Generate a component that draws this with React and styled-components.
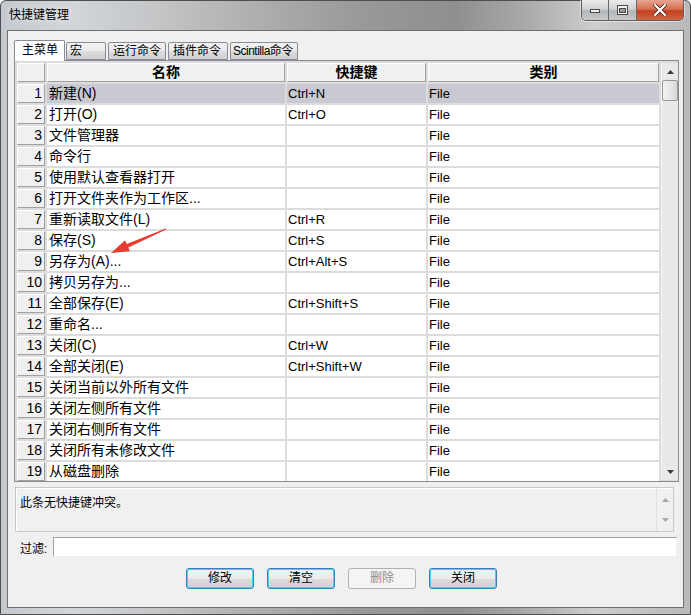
import styled, { createGlobalStyle } from 'styled-components';

const FONT = `"Liberation Sans", "Noto Sans CJK SC", sans-serif`;

const GlobalStyle = createGlobalStyle`
  html, body {
    margin: 0;
    padding: 0;
    overflow: hidden;
    background: #ffffff;
  }
`

const Window = styled.div`
  position: relative;
  box-sizing: border-box;
  width: 691px;
  height: 615px;
  border: 1px solid #4e4e4e;
  border-radius: 6px 6px 0 0;
  background: linear-gradient(90deg, #c3c9cf 0%, #d2d6da 10%, #c4c6c8 22%, #aeb0b2 36%, #999999 52%, #8f8f8f 66%, #a9a9a9 76%, #cdcdcd 86%, #b9b9b9 100%);
  display: flex;
  flex-direction: column;
  font-family: ${FONT};
  color: #000;
`

const TitleBar = styled.div`
  height: 29px;
  display: flex;
  align-items: flex-start;
`

const Title = styled.div`
  font-size: 12px;
  line-height: 12px;
  margin: 8px 0 0 8px;
  color: #000;
  text-shadow: 0 0 6px rgba(255, 255, 255, 0.9);
`

const Caption = styled.div`
  margin-left: auto;
  margin-right: 6px;
  margin-top: -1px;
  display: flex;
  height: 20px;
  border: 1px solid #5e5e5e;
  border-top: none;
  border-radius: 0 0 5px 5px;
  overflow: hidden;
  box-shadow: 0 0 0 1px rgba(255, 255, 255, 0.45);
`

const CapButton = styled.div`
  width: ${p => p.$w}px;
  height: 20px;
  display: flex;
  align-items: center;
  justify-content: center;
  border-left: ${p => (p.$first ? 'none' : '1px solid #6a6a6a')};
  background: ${p =>
    p.$close
      ? 'linear-gradient(180deg, #e8a593 0%, #d6704f 45%, #c2401f 55%, #d0663f 100%)'
      : 'linear-gradient(180deg, #e9eaeb 0%, #cfd1d3 45%, #b3b6b9 55%, #c7c9cb 100%)'};
`

const Client = styled.div`
  flex: 1;
  margin: 0 6px 6px 6px;
  border: 1px solid #6f6f6f;
  background: #f0f0f0;
  display: flex;
  flex-direction: column;
  padding-top: 9px;
`

const TabStrip = styled.div`
  display: flex;
  align-items: flex-end;
  height: 20px;
  margin-left: 6px;
  gap: 2px;
  position: relative;
  z-index: 1;
`

const Tab = styled.div`
  box-sizing: border-box;
  width: ${p => p.$w}px;
  height: ${p => (p.$active ? 21 : 18)}px;
  margin-bottom: ${p => (p.$active ? -1 : 0)}px;
  margin-right: ${p => (p.$active ? -1 : 0)}px;
  padding-left: ${p => p.$pad}px;
  border: 1px solid #898c95;
  border-bottom: ${p => (p.$active ? 'none' : '1px solid #898c95')};
  border-radius: 2px 2px 0 0;
  background: ${p => (p.$active ? '#ffffff' : 'linear-gradient(180deg, #f2f2f2 0%, #ebebeb 50%, #dddddd 51%, #cfcfcf 100%)')};
  font-size: 12px;
  letter-spacing: ${p => (p.$tight ? '-0.5px' : 'normal')};
  line-height: ${p => (p.$active ? 19 : 16)}px;
  white-space: nowrap;
  overflow: hidden;
`

const TabPage = styled.div`
  box-sizing: border-box;
  width: 665px;
  height: 422px;
  margin-left: 6px;
  border: 1px solid #898c95;
  background: #dcdcdc;
  padding: 2px 1px 1px 2px;
  display: flex;
  gap: 2px;
`

const Table = styled.div`
  display: flex;
  flex-direction: column;
  gap: 2px;
`

const Row = styled.div`
  display: grid;
  grid-template-columns: 28px 238px 139px 231px;
  column-gap: 2px;
  height: 19px;
`

const Bevel = styled.div`
  box-sizing: border-box;
  background: #f0f0f0;
  border-top: 1px solid #ffffff;
  border-left: 1px solid #ffffff;
  border-right: 1px solid #a0a0a0;
  border-bottom: 1px solid #a0a0a0;
`

const NumCell = styled(Bevel)`
  text-align: right;
  padding-right: 2px;
  font-size: 14px;
  line-height: 17px;
`

const HeadCell = styled(Bevel)`
  text-align: center;
  font-weight: bold;
  font-size: 14px;
  line-height: 17px;
`

const Cell = styled.div`
  background: ${p => (p.$sel ? '#c9c9d2' : '#ffffff')};
  padding-left: ${p => (p.$latin ? 1 : 2)}px;
  font-size: ${p => (p.$latin ? 13 : 14)}px;
  line-height: 19px;
  white-space: nowrap;
  overflow: hidden;
`

const ScrollBar = styled.div`
  width: 17px;
  box-sizing: border-box;
  background: #e9e9e9;
  border-left: 1px solid #f5f5f5;
  display: flex;
  flex-direction: column;
  align-items: center;
`

const ArrowBox = styled.div`
  height: 17px;
  width: 100%;
  display: flex;
  align-items: center;
  justify-content: center;
`

const Thumb = styled.div`
  box-sizing: border-box;
  width: 16px;
  height: 21px;
  border: 1px solid #979797;
  border-radius: 2px;
  background: linear-gradient(90deg, #f3f3f3 0%, #e6e6e6 50%, #d8d8d8 100%);
`

const Spacer = styled.div`
  flex: 1;
`

const ConflictBox = styled.div`
  box-sizing: border-box;
  width: 659px;
  height: 45px;
  margin: 5px 0 0 7px;
  border: 1px solid #c9c9c9;
  box-shadow: inset 1px 1px 0 #ffffff;
  display: flex;
`

const ConflictText = styled.div`
  flex: 1;
  font-size: 12px;
  padding: 5px 0 0 4px;
`

const SmallScroll = styled.div`
  width: 16px;
  border-left: 1px solid #e2e2e2;
  display: flex;
  flex-direction: column;
  justify-content: space-between;
  padding: 3px 0;
`

const FilterRow = styled.div`
  display: flex;
  align-items: center;
  margin-top: 5px;
  height: 20px;
  padding-left: 12px;
`

const Label = styled.div`
  font-size: 12px;
  width: 33px;
`

const Input = styled.div`
  box-sizing: border-box;
  width: 624px;
  height: 20px;
  background: #ffffff;
  border: 1px solid;
  border-color: #a0a0a0 #f0f0f0 #f0f0f0 #a0a0a0;
`

const Buttons = styled.div`
  display: flex;
  gap: 13px;
  margin: 11px 0 0 178px;
`

const Button = styled.div`
  box-sizing: border-box;
  width: 68px;
  height: 21px;
  border: 1px solid ${p => (p.$disabled ? '#adb2b5' : '#3c7fb1')};
  border-radius: 3px;
  box-shadow: ${p => (p.$disabled ? 'none' : 'inset 0 0 0 1px #48d0f6')};
  background: ${p =>
    p.$disabled ? '#f4f4f4' : 'linear-gradient(180deg, #f2f2f2 0%, #ebebeb 50%, #dddddd 51%, #cfcfcf 100%)'};
  color: ${p => (p.$disabled ? '#8d8d8d' : '#000')};
  font-size: 12px;
  line-height: 19px;
  text-align: center;
`

const Annotation = styled.svg`
  position: absolute;
  left: 105px;
  top: 222px;
  pointer-events: none;
`

const Tri = ({ down, color }) => (
  <svg width="7" height="4" viewBox="0 0 7 4">
    {down ? <polygon points="0,0 7,0 3.5,4" fill={color} /> : <polygon points="0,4 7,4 3.5,0" fill={color} />}
  </svg>
)

const rows = [
  ['新建(N)', 'Ctrl+N'],
  ['打开(O)', 'Ctrl+O'],
  ['文件管理器', ''],
  ['命令行', ''],
  ['使用默认查看器打开', ''],
  ['打开文件夹作为工作区...', ''],
  ['重新读取文件(L)', 'Ctrl+R'],
  ['保存(S)', 'Ctrl+S'],
  ['另存为(A)...', 'Ctrl+Alt+S'],
  ['拷贝另存为...', ''],
  ['全部保存(E)', 'Ctrl+Shift+S'],
  ['重命名...', ''],
  ['关闭(C)', 'Ctrl+W'],
  ['全部关闭(E)', 'Ctrl+Shift+W'],
  ['关闭当前以外所有文件', ''],
  ['关闭左侧所有文件', ''],
  ['关闭右侧所有文件', ''],
  ['关闭所有未修改文件', ''],
  ['从磁盘删除', ''],
]

const tabs = [
  { label: '主菜单', w: 51, pad: 7, active: true },
  { label: '宏', w: 40, pad: 3 },
  { label: '运行命令', w: 58, pad: 4 },
  { label: '插件命令', w: 60, pad: 4 },
  { label: 'Scintilla命令', w: 68, pad: 2, tight: true },
]

const App = () => {
  return (
    <>
      <GlobalStyle />
      <Window>
        <TitleBar>
          <Title>快捷键管理</Title>
          <Caption>
            <CapButton $w={26} $first>
              <svg width="10" height="6" viewBox="0 0 10 6">
                <rect x="0.5" y="2.5" width="9" height="3" fill="#eeeeee" stroke="#4a4a4a" />
              </svg>
            </CapButton>
            <CapButton $w={27}>
              <svg width="11" height="10" viewBox="0 0 11 10">
                <rect x="0.5" y="0.5" width="10" height="9" fill="#f2f2f2" stroke="#4a4a4a" />
                <rect x="2.5" y="3.5" width="6" height="4" fill="#9a9a9a" stroke="#4a4a4a" />
              </svg>
            </CapButton>
            <CapButton $w={46} $close>
              <svg width="14" height="12" viewBox="0 0 14 12">
                <path d="M2 1 L12 11 M12 1 L2 11" stroke="#5a2a20" strokeWidth="4" strokeLinecap="square" />
                <path d="M2 1 L12 11 M12 1 L2 11" stroke="#ffffff" strokeWidth="2.2" strokeLinecap="square" />
              </svg>
            </CapButton>
          </Caption>
        </TitleBar>

        <Client>
          <TabStrip>
            {tabs.map(t => (
              <Tab key={t.label} $w={t.w} $pad={t.pad} $active={t.active} $tight={t.tight}>
                {t.label}
              </Tab>
            ))}
          </TabStrip>

          <TabPage>
            <Table>
              <Row>
                <Bevel />
                <HeadCell>名称</HeadCell>
                <HeadCell>快捷键</HeadCell>
                <HeadCell>类别</HeadCell>
              </Row>
              {rows.map(([name, key], i) => (
                <Row key={i}>
                  <NumCell>{i + 1}</NumCell>
                  <Cell $sel={i === 0}>{name}</Cell>
                  <Cell $sel={i === 0} $latin>{key}</Cell>
                  <Cell $sel={i === 0} $latin>File</Cell>
                </Row>
              ))}
            </Table>
            <ScrollBar>
              <ArrowBox><Tri color="#3c3c3c" /></ArrowBox>
              <Thumb />
              <Spacer />
              <ArrowBox><Tri down color="#3c3c3c" /></ArrowBox>
            </ScrollBar>
          </TabPage>

          <ConflictBox>
            <ConflictText>此条无快捷键冲突。</ConflictText>
            <SmallScroll>
              <ArrowBox><Tri color="#a8a8a8" /></ArrowBox>
              <ArrowBox><Tri down color="#a8a8a8" /></ArrowBox>
            </SmallScroll>
          </ConflictBox>

          <FilterRow>
            <Label>过滤:</Label>
            <Input />
          </FilterRow>

          <Buttons>
            <Button>修改</Button>
            <Button>清空</Button>
            <Button $disabled>删除</Button>
            <Button>关闭</Button>
          </Buttons>
        </Client>

        <Annotation width="65" height="35" viewBox="0 0 65 35">
          <polygon
            points="60.2,6.5 22.3,24.6 23.9,28.3 5,30 19.1,17.3 20.7,21 59.8,5.5"
            fill="#e63b2e"
          />
        </Annotation>
      </Window>
    </>
  )
}

export default App
